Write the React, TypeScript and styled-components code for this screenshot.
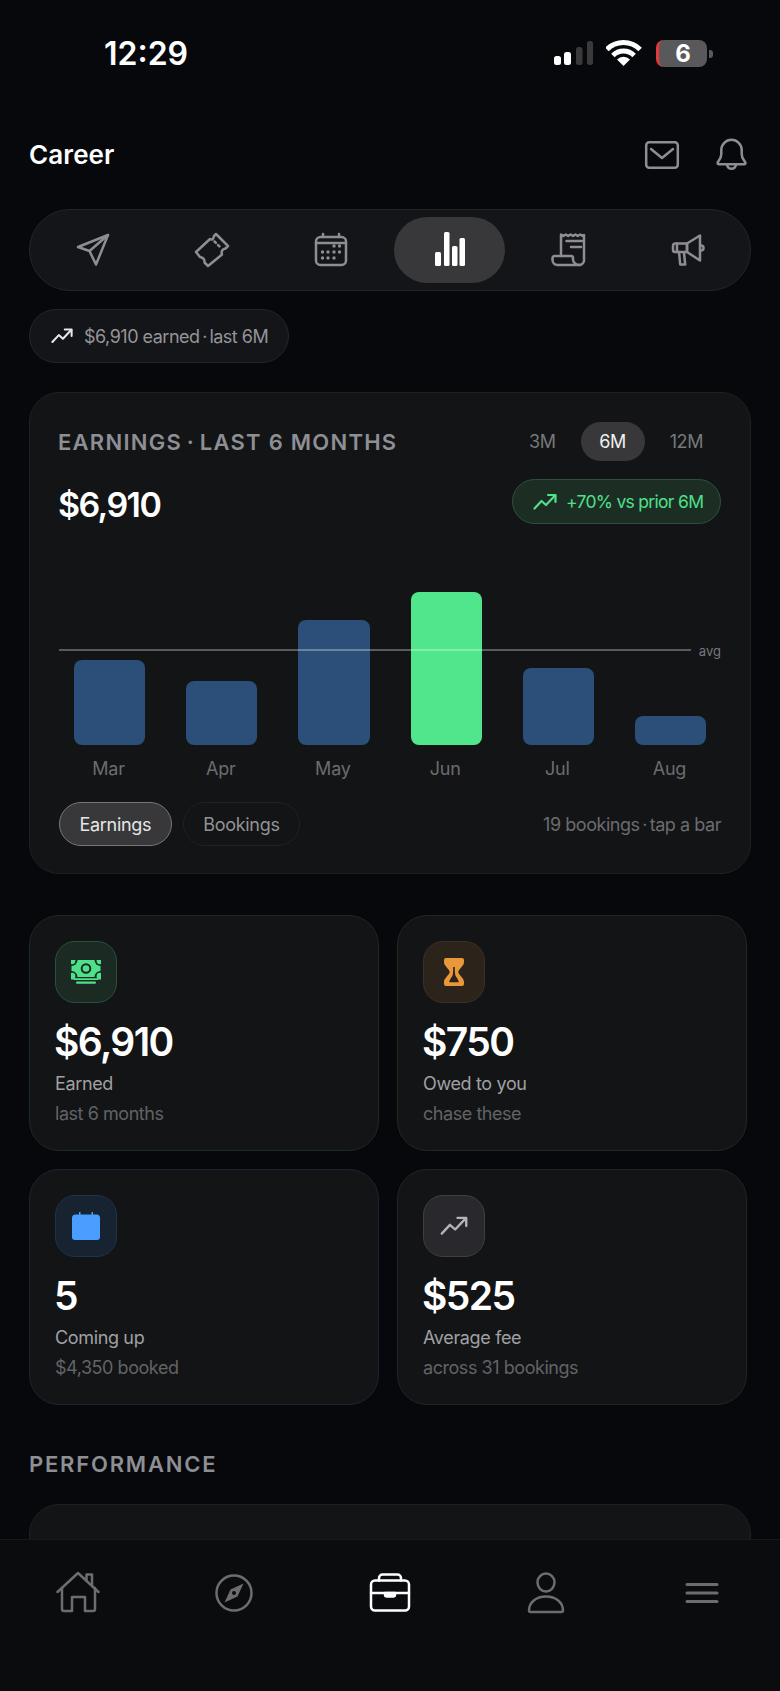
import React from "react";
import styled, { createGlobalStyle } from "styled-components";

const GlobalStyle = createGlobalStyle`
  html, body { margin: 0; padding: 0; background: #07080b; }
  * { box-sizing: border-box; }
  body { font-family: Inter, "Noto Sans", "Liberation Sans", sans-serif; }
`;

const tones = {
  green: { card: "#1a2a26", bg: "#1b2a22", border: "#27513a" },
  orange: { card: "#2a241f", bg: "#2c241a", border: "#3a3026" },
  blue: { card: "#1a2530", bg: "#172331", border: "#1f3349" },
  gray: { card: "#232428", bg: "#28282d", border: "#3e3e44" },
};
type Tone = keyof typeof tones;

const Page = styled.div`
  position: relative;
  width: 780px;
  height: 1691px;
  overflow: hidden;
  background: #07080b;
  color: #fff;
`;

const StatusBar = styled.div`
  height: 106px;
  padding: 0 73px 0 104px;
  display: flex;
  align-items: center;
  justify-content: space-between;
`;

const Clock = styled.div`
  font-size: 32px;
  font-weight: 600;
  letter-spacing: 0;
`;

const StatusIcons = styled.div`
  display: flex;
  align-items: center;
`;

const Battery = styled.div`
  position: relative;
  width: 51px;
  height: 27px;
  margin-left: 14px;
  border-radius: 8px;
  background: #59595b;
  border-left: 3px solid #e5383b;
  display: flex;
  align-items: center;
  justify-content: center;
  font-size: 24px;
  font-weight: 700;
  &::after {
    content: "";
    position: absolute;
    right: -6px;
    top: 10px;
    width: 4px;
    height: 8px;
    border-radius: 0 3px 3px 0;
    background: #59595b;
  }
`;

const Content = styled.div`
  padding: 0 29px;
`;

const Header = styled.div`
  margin-top: 31px;
  height: 36px;
  padding-right: 1px;
  display: flex;
  align-items: center;
  justify-content: space-between;
`;

const Title = styled.h1`
  margin: -2px 0 0;
  font-size: 26px;
  font-weight: 600;
  letter-spacing: 0.1px;
`;

const HeaderActions = styled.div`
  display: flex;
  gap: 34px;
  color: #8e8e92;
`;

const Segments = styled.div`
  margin-top: 36px;
  height: 82px;
  padding: 7px;
  display: flex;
  gap: 8px;
  background: #141518;
  border: 1px solid #25262b;
  border-radius: 41px;
`;

const Segment = styled.div<{ $active?: boolean }>`
  flex: 1;
  display: flex;
  align-items: center;
  justify-content: center;
  border-radius: 33px;
  color: ${(p) => (p.$active ? "#fff" : "#8e8e92")};
  background: ${(p) => (p.$active ? "#38383a" : "transparent")};
`;

const Dot = styled.span`
  margin: 0 -2px;
`;

const Chip = styled.div`
  margin-top: 18px;
  width: 260px;
  height: 54px;
  padding-left: 21px;
  display: flex;
  align-items: center;
  gap: 11px;
  background: #141518;
  border: 1px solid #25262b;
  border-radius: 27px;
  font-size: 18px;
  letter-spacing: -0.5px;
  color: #949498;
  white-space: nowrap;
`;

const TrendTint = styled.span<{ $color: string }>`
  display: flex;
  color: ${(p) => p.$color};
`;

const ChartCard = styled.section`
  margin-top: 29px;
  height: 482px;
  padding: 29px;
  background: #131416;
  border: 1px solid #1f2024;
  border-radius: 30px;
`;

const CardTop = styled.div`
  display: flex;
  align-items: center;
  justify-content: space-between;
`;

const SectionTitle = styled.h2`
  margin: 0 0 0 -1px;
  font-size: 22px;
  line-height: 26px;
  font-weight: 600;
  letter-spacing: 1.25px;
  color: #8e8f94;
  white-space: nowrap;
`;

const RangeTabs = styled.div`
  display: flex;
  align-items: center;
  gap: 7px;
`;

const RangeTab = styled.div<{ $active?: boolean }>`
  height: 39px;
  width: ${(p) => (p.$active ? "64px" : "auto")};
  padding: ${(p) => (p.$active ? "0" : "0 18px")};
  display: flex;
  align-items: center;
  justify-content: center;
  border-radius: 20px;
  font-size: 18px;
  letter-spacing: -0.4px;
  color: ${(p) => (p.$active ? "#f0f0f0" : "#77787c")};
  background: ${(p) => (p.$active ? "#38383a" : "transparent")};
`;

const ValueRow = styled.div`
  margin-top: 18px;
  height: 45px;
  display: flex;
  align-items: center;
  justify-content: space-between;
`;

const BigValue = styled.div`
  margin: 6px 0 0 -1px;
  font-size: 34px;
  font-weight: 600;
  letter-spacing: -1.6px;
`;

const TrendBadge = styled.div`
  width: 209px;
  height: 45px;
  padding-left: 20px;
  display: flex;
  align-items: center;
  gap: 9px;
  border-radius: 23px;
  background: #1c2e24;
  border: 1px solid #2a5239;
  color: #4fe08a;
  font-size: 17.5px;
  letter-spacing: -0.7px;
  white-space: nowrap;
`;

const Plot = styled.div`
  position: relative;
  margin-top: 22px;
  height: 199px;
  padding: 0 15px;
  display: flex;
  align-items: flex-end;
  gap: 41px;
`;

const Bar = styled.div<{ $h: number; $hot?: boolean }>`
  flex: 1;
  height: ${(p) => p.$h}px;
  border-radius: 8px;
  background: ${(p) => (p.$hot ? "#50e68c" : "#2b4f78")};
`;

const AvgLine = styled.div`
  position: absolute;
  left: 0;
  right: 30px;
  top: 103px;
  height: 2px;
  background: rgba(255, 255, 255, 0.3);
`;

const AvgLabel = styled.span`
  position: absolute;
  right: 0;
  top: 96px;
  font-size: 13px;
  line-height: 18px;
  color: #77787c;
`;

const MonthRow = styled.div`
  margin-top: 13px;
  padding: 0 16px 0 14px;
  display: flex;
  gap: 41px;
`;

const Month = styled.div`
  flex: 1;
  min-width: 0;
  text-align: center;
  font-size: 18px;
  line-height: 22px;
  letter-spacing: -0.2px;
  color: #6b6c70;
`;

const CardFoot = styled.div`
  margin-top: 22px;
  display: flex;
  align-items: center;
`;

const Pill = styled.div<{ $active?: boolean }>`
  height: 44px;
  padding: 0 19.5px;
  margin-right: 11px;
  display: flex;
  align-items: center;
  border-radius: 22px;
  font-size: 18px;
  letter-spacing: -0.3px;
  color: ${(p) => (p.$active ? "#e6e6e8" : "#929296")};
  background: ${(p) => (p.$active ? "#38383a" : "transparent")};
  border: 1px solid ${(p) => (p.$active ? "#77777b" : "#202125")};
`;

const FootNote = styled.div`
  margin-left: auto;
  font-size: 18px;
  letter-spacing: -0.45px;
  color: #6b6c70;
  white-space: nowrap;
`;

const StatGrid = styled.div`
  margin-top: 41px;
  display: grid;
  grid-template-columns: 350px 350px;
  grid-auto-rows: 236px;
  gap: 18px;
`;

const StatCard = styled.div<{ $tone: Tone }>`
  padding: 25px;
  background: #131416;
  border: 1px solid ${(p) => tones[p.$tone].card};
  border-radius: 30px;
`;

const IconTile = styled.div<{ $tone: Tone }>`
  width: 62px;
  height: 62px;
  display: flex;
  align-items: center;
  justify-content: center;
  border-radius: 20px;
  background: ${(p) => tones[p.$tone].bg};
  border: 1px solid ${(p) => tones[p.$tone].border};
`;

const StatValue = styled.div`
  margin: 17px 0 0 -1px;
  font-size: 39px;
  line-height: 44px;
  font-weight: 600;
  letter-spacing: -1.6px;
`;

const StatLabel = styled.div`
  margin-top: 8px;
  font-size: 18px;
  line-height: 24px;
  letter-spacing: -0.35px;
  color: #a0a0a4;
`;

const StatSub = styled.div`
  margin-top: 6px;
  font-size: 18px;
  line-height: 24px;
  letter-spacing: -0.45px;
  color: #626367;
`;

const PerformanceTitle = styled(SectionTitle)`
  margin: 46px 0 0;
  letter-spacing: 1.8px;
`;

const PerformanceCard = styled.section`
  margin-top: 27px;
  height: 220px;
  background: #131416;
  border: 1px solid #1f2024;
  border-radius: 30px;
`;

const TabBar = styled.nav`
  position: absolute;
  left: 0;
  right: 0;
  bottom: 0;
  height: 152px;
  padding-bottom: 45px;
  display: flex;
  background: #0b0c0e;
  border-top: 1px solid #18191c;
`;

const Tab = styled.div<{ $active?: boolean }>`
  flex: 1;
  display: flex;
  align-items: center;
  justify-content: center;
  color: ${(p) => (p.$active ? "#fff" : "#6d6d70")};
`;

const WifiMark = styled.svg`
  margin-left: 13px;
`;

const line = {
  fill: "none",
  stroke: "currentColor",
  strokeWidth: 2.5,
  strokeLinecap: "round" as const,
  strokeLinejoin: "round" as const,
};

const Signal = () => (
  <svg width="40" height="25" viewBox="0 0 40 25">
    <rect x="1" y="15" width="7" height="9" rx="2.5" fill="#fff" />
    <rect x="11" y="11" width="7" height="13" rx="2.5" fill="#fff" />
    <rect x="23" y="6" width="6.5" height="18" rx="2.5" fill="#3a3a3c" />
    <rect x="34" y="0" width="6" height="24" rx="2.5" fill="#3a3a3c" />
  </svg>
);

const Wifi = () => (
  <WifiMark width="36" height="28" viewBox="0 0 36 28">
    <g fill="none" stroke="#fff" strokeWidth="5">
      <path d="M.9 10.4A23.5 23.5 0 0 1 34.1 10.4" />
      <path d="M6.9 16.4A15 15 0 0 1 28.1 16.4" />
    </g>
    <path d="M17.5 27L11 20.5A9.2 9.2 0 0 1 24 20.5Z" fill="#fff" />
  </WifiMark>
);

const MailIcon = () => (
  <svg width="36" height="36" viewBox="0 0 36 36" {...line}>
    <rect x="2.2" y="5.2" width="31.6" height="25.6" rx="3" />
    <path d="M7 12l11 9 11-9" />
  </svg>
);

const BellIcon = () => (
  <svg width="36" height="36" viewBox="0 0 36 36" {...line}>
    <path d="M3.5 26c0-2 3.8-3.2 3.8-9v-4a10.2 10.2 0 0 1 20.4 0v4c0 5.8 3.8 7 3.8 9a1.2 1.2 0 0 1-1.2 1.2H4.7A1.2 1.2 0 0 1 3.5 26Z" />
    <path d="M13 27.5a4.6 5.5 0 0 0 9 0" />
  </svg>
);

const SendIcon = () => (
  <svg width="36" height="36" viewBox="0 0 36 36" {...line}>
    <path d="M33 3L3 15l11.500 4 6.500 13.500Z" />
    <path d="M33 3L14.500 19" />
  </svg>
);

const TicketIcon = () => (
  <svg width="36" height="36" viewBox="0 0 36 36" {...line}>
    <path d="M2 20L16 7Q19 9 20 4L22 2 34 14 31.500 16.500Q26.500 17.500 28 22.500L14 34 10.500 30.500Q11 26 6 25Z" />
    <path d="M20.500 9.500L27 16" strokeDasharray="2 3" />
  </svg>
);

const CalendarIcon = () => {
  const dots = [
    [21, 14],
    [26.5, 14],
    [9.5, 20],
    [15, 20],
    [21, 20],
    [26.5, 20],
    [9.5, 26],
    [15, 26],
    [21, 26],
  ];
  return (
    <svg width="36" height="36" viewBox="0 0 36 36" {...line}>
      <rect x="3" y="5" width="30" height="28" rx="4.5" />
      <path d="M3 11h30M10 2v3M26 2v3" />
      {dots.map(([x, y]) => (
        <circle key={`${x}-${y}`} cx={x} cy={y} r="1.7" fill="currentColor" stroke="none" />
      ))}
    </svg>
  );
};

const BarsIcon = () => (
  <svg width="36" height="36" viewBox="0 0 36 36" fill="currentColor">
    <rect x="3" y="20" width="6" height="14" rx="1.5" />
    <rect x="12" y="0" width="5.5" height="34" rx="1.5" />
    <rect x="20" y="14" width="5.5" height="20" rx="1.5" />
    <rect x="27.5" y="6" width="5.5" height="28" rx="1.5" />
  </svg>
);

const ReceiptIcon = () => (
  <svg width="36" height="36" viewBox="0 0 36 36" {...line}>
    <path d="M10 24V2.500l2.400 1.500 2.400-1.500 2.400 1.500 2.400-1.500 2.400 1.500 2.400-1.500 2.400 1.500 2.400-1.500 2.400 1.500 1.400-1V27a5 5 0 0 1-5 6" />
    <path d="M29 33H6.500A5 5 0 0 1 1.500 28v-2a2 2 0 0 1 2-2H20a2 2 0 0 1 2 2v1.500c0 3 3 5.500 7 5.500Z" />
    <path d="M15.500 9h15.500M20 15h10" />
  </svg>
);

const MegaphoneIcon = () => (
  <svg width="36" height="36" viewBox="0 0 36 36" {...line}>
    <path d="M5 11.500h12v8.500H5a2 2 0 0 1-2-2v-4.500a2 2 0 0 1 2-2Z" />
    <path d="M17 11.500L30 3.500v25L17 20Z" />
    <path d="M9 20l1.200 12.500h5L14 21" />
    <path d="M31 13.500a2.500 2.500 0 0 1 0 5" />
    <path d="M7 11.500v8.500" />
  </svg>
);

const Trend = ({ size = 24, width = 2.2 }: { size?: number; width?: number }) => (
  <svg width={size} height={size} viewBox="0 0 24 24" fill="none" stroke="currentColor" strokeWidth={width} strokeLinecap="round" strokeLinejoin="round">
    <path d="M1.500 18.500L8.500 11l4.500 4L22 5.500" />
    <path d="M15 5h7.500v7" />
  </svg>
);

const MoneyIcon = () => (
  <svg width="30" height="24" viewBox="0 0 30 24">
    <rect x="0.500" y="0" width="29" height="17" rx="2" fill="#4fe08a" />
    <g fill="#1b2a22">
      <circle cx="0.500" cy="0" r="6" />
      <circle cx="29.500" cy="0" r="6" />
      <circle cx="0.500" cy="17" r="6" />
      <circle cx="29.500" cy="17" r="6" />
    </g>
    <g fill="#4fe08a">
      <circle cx="1" cy="0.800" r="3.400" />
      <circle cx="29" cy="0.800" r="3.400" />
      <circle cx="1" cy="16.200" r="3.400" />
      <circle cx="29" cy="16.200" r="3.400" />
    </g>
    <circle cx="15" cy="8.500" r="4.300" fill="none" stroke="#1b2a22" strokeWidth="2" />
    <rect x="2.500" y="18.300" width="25" height="1.800" rx="0.900" fill="#4fe08a" />
    <rect x="5" y="21.500" width="20" height="2.200" rx="1" fill="#4fe08a" />
  </svg>
);

const HourglassIcon = () => (
  <svg width="20" height="28" viewBox="0 0 20 28">
    <path
      fill="#e8973a"
      fillRule="evenodd"
      d="M2 0h16a2 2 0 0 1 2 2v2c0 4-4.500 6-5.800 10 1.300 4 5.800 6 5.800 10v2a2 2 0 0 1-2 2H2a2 2 0 0 1-2-2v-2c0-4 4.500-6 5.800-10C4.500 10 0 8 0 4V2a2 2 0 0 1 2-2ZM9.200 9c0 3 0 6-.6 8.500-1 2-3 4-3.400 6.700h9.600c-.4-2.700-2.400-4.700-3.400-6.700-.6-2.500-.6-5.500-.6-8.500Z"
    />
  </svg>
);

const BlueCalendarIcon = () => (
  <svg width="28" height="28" viewBox="0 0 28 28">
    <path fill="#4a9eff" d="M7 0h1.500v2.500h11V0H21v2.500h3.500A3.500 3.500 0 0 1 28 6v19a3 3 0 0 1-3 3H3a3 3 0 0 1-3-3V6a3.500 3.500 0 0 1 3.500-3.500H7Z" />
  </svg>
);

const HomeIcon = () => (
  <svg width="44" height="44" viewBox="0 0 44 44" {...line}>
    <path d="M1.500 21L22 2l20.500 19" />
    <path d="M6 17v21a2 2 0 0 0 2 2h8V26h13v14h8a2 2 0 0 0 2-2V17" />
    <path d="M30.500 9V3.500h5.500v11" />
  </svg>
);

const CompassIcon = () => (
  <svg width="40" height="40" viewBox="0 0 40 40">
    <circle cx="20" cy="20" r="17.500" {...line} />
    <path fill="currentColor" fillRule="evenodd" d="M29.500 10.500L23.500 23.500 10.500 29.500 16.500 16.500ZM20 18a2 2 0 1 0 0 4 2 2 0 0 0 0-4Z" />
  </svg>
);

const BriefcaseIcon = () => (
  <svg width="44" height="44" viewBox="0 0 44 44" {...line}>
    <rect x="3" y="9.500" width="38" height="30" rx="4" />
    <path d="M11 9.500V7a3.500 3.500 0 0 1 3.500-3.500h15A3.500 3.500 0 0 1 33 7v2.500" />
    <path d="M3 22h38" />
    <path d="M17 22h10v1.500a2 2 0 0 1-2 2h-6a2 2 0 0 1-2-2Z" fill="currentColor" />
  </svg>
);

const PersonIcon = () => (
  <svg width="40" height="44" viewBox="0 0 40 44" {...line}>
    <ellipse cx="20" cy="11.500" rx="8.500" ry="9" />
    <path d="M3 39.500c0-8 7-14 17-14s17 6 17 14a1.500 1.500 0 0 1-1.500 1.500h-31A1.500 1.500 0 0 1 3 39.500Z" />
  </svg>
);

const MenuIcon = () => (
  <svg width="36" height="24" viewBox="0 0 36 24" fill="none" stroke="currentColor" strokeWidth="3" strokeLinecap="round">
    <path d="M3 3.500h30M3 12h30M3 20.500h30" />
  </svg>
);

const segments = [
  { icon: <SendIcon /> },
  { icon: <TicketIcon /> },
  { icon: <CalendarIcon /> },
  { icon: <BarsIcon />, active: true },
  { icon: <ReceiptIcon /> },
  { icon: <MegaphoneIcon /> },
];

const months = [
  { name: "Mar", h: 85 },
  { name: "Apr", h: 64 },
  { name: "May", h: 125 },
  { name: "Jun", h: 153, hot: true },
  { name: "Jul", h: 77 },
  { name: "Aug", h: 29 },
];

const stats: { tone: Tone; icon: React.ReactNode; value: string; label: string; sub: string }[] = [
  { tone: "green", icon: <MoneyIcon />, value: "$6,910", label: "Earned", sub: "last 6 months" },
  { tone: "orange", icon: <HourglassIcon />, value: "$750", label: "Owed to you", sub: "chase these" },
  { tone: "blue", icon: <BlueCalendarIcon />, value: "5", label: "Coming up", sub: "$4,350 booked" },
  {
    tone: "gray",
    icon: (
      <TrendTint $color="#b5b5b8">
        <Trend size={28} width={2} />
      </TrendTint>
    ),
    value: "$525",
    label: "Average fee",
    sub: "across 31 bookings",
  },
];

const tabs = [
  { icon: <HomeIcon /> },
  { icon: <CompassIcon /> },
  { icon: <BriefcaseIcon />, active: true },
  { icon: <PersonIcon /> },
  { icon: <MenuIcon /> },
];

export default function App() {
  return (
    <Page>
      <GlobalStyle />
      <StatusBar>
        <Clock>12:29</Clock>
        <StatusIcons>
          <Signal />
          <Wifi />
          <Battery>6</Battery>
        </StatusIcons>
      </StatusBar>
      <Content>
        <Header>
          <Title>Career</Title>
          <HeaderActions>
            <MailIcon />
            <BellIcon />
          </HeaderActions>
        </Header>

        <Segments>
          {segments.map((s, i) => (
            <Segment key={i} $active={s.active}>
              {s.icon}
            </Segment>
          ))}
        </Segments>

        <Chip>
          <TrendTint $color="#e8e8ea">
            <Trend size={22} />
          </TrendTint>
          <span>
            $6,910 earned <Dot>·</Dot> last 6M
          </span>
        </Chip>

        <ChartCard>
          <CardTop>
            <SectionTitle>
              EARNINGS <Dot>·</Dot> LAST 6 MONTHS
            </SectionTitle>
            <RangeTabs>
              <RangeTab>3M</RangeTab>
              <RangeTab $active>6M</RangeTab>
              <RangeTab>12M</RangeTab>
            </RangeTabs>
          </CardTop>
          <ValueRow>
            <BigValue>$6,910</BigValue>
            <TrendBadge>
              <Trend size={24} />
              +70% vs prior 6M
            </TrendBadge>
          </ValueRow>
          <Plot>
            {months.map((m) => (
              <Bar key={m.name} $h={m.h} $hot={m.hot} />
            ))}
            <AvgLine />
            <AvgLabel>avg</AvgLabel>
          </Plot>
          <MonthRow>
            {months.map((m) => (
              <Month key={m.name}>{m.name}</Month>
            ))}
          </MonthRow>
          <CardFoot>
            <Pill $active>Earnings</Pill>
            <Pill>Bookings</Pill>
            <FootNote>
              19 bookings <Dot>·</Dot> tap a bar
            </FootNote>
          </CardFoot>
        </ChartCard>

        <StatGrid>
          {stats.map((s) => (
            <StatCard key={s.label} $tone={s.tone}>
              <IconTile $tone={s.tone}>{s.icon}</IconTile>
              <StatValue>{s.value}</StatValue>
              <StatLabel>{s.label}</StatLabel>
              <StatSub>{s.sub}</StatSub>
            </StatCard>
          ))}
        </StatGrid>

        <PerformanceTitle>PERFORMANCE</PerformanceTitle>
        <PerformanceCard />
      </Content>

      <TabBar>
        {tabs.map((t, i) => (
          <Tab key={i} $active={t.active}>
            {t.icon}
          </Tab>
        ))}
      </TabBar>
    </Page>
  );
}
